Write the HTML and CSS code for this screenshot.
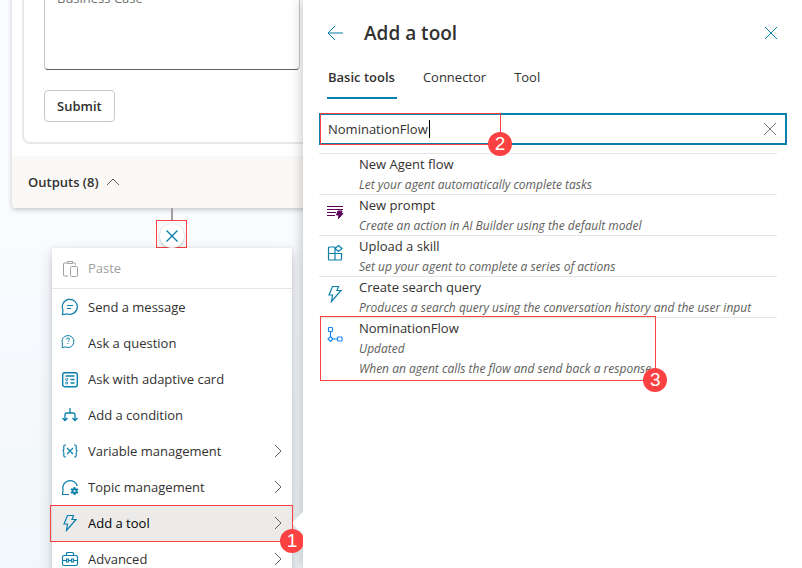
FILE: index.html
```html
<!DOCTYPE html>
<html lang="en">
<head>
<meta charset="utf-8">
<meta name="viewport" content="width=device-width, initial-scale=1">
<title>Add a tool</title>
<link rel="stylesheet" href="styles.css">
</head>
<body>
<div class="app">
  <main class="canvas">
    <section class="card">
      <form class="form">
        <textarea class="field" aria-label="Business Case" placeholder="Business Case"></textarea>
        <button class="submit" type="button">Submit</button>
      </form>
      <button class="outputs" type="button">Outputs (8)
        <svg width="14" height="14" viewBox="0 0 14 14"><path d="M1 10 7 4l6 6"/></svg>
      </button>
    </section>
    <div class="connector"></div>
    <div class="node-slot">
      <button class="node-close" type="button" aria-label="Close menu"><svg width="14" height="14" viewBox="0 0 14 14"><path d="m1.500 1.500 11 11m0-11-11 11"/></svg></button>
    </div>
    <nav class="menu" aria-label="Add node">
      <button class="item paste" type="button" disabled>
        <svg class="icon" viewBox="0 0 18 18"><path d="M6 4H3.500q-1 0-1 1v11q0 1 1 1H7M12 4h1.500q1 0 1 1v1M6.500 2.500h5v2h-5zM10.500 7.500h5q1 0 1 1v8q0 1-1 1h-5q-1 0-1-1v-8q0-1 1-1z"/></svg>
        <span>Paste</span>
      </button>
      <button class="item" type="button">
        <svg class="icon" viewBox="0 0 18 18"><path stroke-width="1.200" d="M1.500 16.500 2 12A7.500 7.500 0 1 1 6 15.800zM6 7.500h6M6 10.500h4"/></svg>
        <span>Send a message</span>
      </button>
      <button class="item" type="button">
        <svg class="icon" viewBox="0 0 18 18"><path d="M1 13.500 1.500 10A6 6 0 1 1 4.500 13zM5.500 5.500q0-1.500 1.500-1.500t1.500 1.500q0 1-1.500 2M7 9v1"/></svg>
        <span>Ask a question</span>
      </button>
      <button class="item" type="button">
        <svg class="icon" viewBox="0 0 18 18"><rect x="1.700" y="2.700" width="14.600" height="14" rx="2" stroke-width="1.400"/><path stroke-width="1.400" d="M4.500 6h9M9.500 9.500h4M9.500 13h4"/><rect x="4.700" y="8.500" width="2" height="2" rx=".8"/><rect x="4.700" y="12" width="2" height="2" rx=".8"/></svg>
        <span>Ask with adaptive card</span>
      </button>
      <button class="item" type="button">
        <svg class="icon" viewBox="0 0 18 18"><path stroke-width="1.300" d="M9 2v5M4 14.500V9q0-2 2-2h6q2 0 2 2v5.500M1.500 12 4 14.500 6.500 12M11.500 12l2.500 2.500 2.500-2.500"/></svg>
        <span>Add a condition</span>
      </button>
      <button class="item" type="button">
        <svg class="icon" viewBox="0 0 18 18"><path stroke-width="1.200" d="M5 3H4Q2.800 3 2.800 4.500v3Q2.800 9 1.300 9q1.500 0 1.500 1.500v3Q2.800 15 4 15h1M13 3h1q1.200 0 1.200 1.500v3q0 1.500 1.500 1.500-1.500 0-1.500 1.500v3q0 1.500-1.200 1.500h-1M6 6l6 6m0-6-6 6"/></svg>
        <span>Variable management</span>
        <svg class="chevron" viewBox="0 0 8 14"><path d="m1 1 6 6-6 6"/></svg>
      </button>
      <button class="item" type="button">
        <svg class="icon" viewBox="0 0 18 18"><path stroke-width="1.200" d="M8 16.500H1.500L2 12a7.300 7.300 0 1 1 14.300-4"/><path stroke-width="2" d="M13.500 9v8M10 11l7 4M17 11l-7 4"/><circle cx="13.500" cy="13" r="2" fill="#fff" stroke-width="1.800"/></svg>
        <span>Topic management</span>
        <svg class="chevron" viewBox="0 0 8 14"><path d="m1 1 6 6-6 6"/></svg>
      </button>
      <button class="item current" type="button">
        <svg class="icon" viewBox="0 0 18 18"><path stroke-width="1.200" d="M6.500 1.500h6l-1.500 4h4L5.500 16.500 6.500 10H3z"/></svg>
        <span>Add a tool</span>
        <svg class="chevron" viewBox="0 0 8 14"><path d="m1 1 6 6-6 6"/></svg>
        <span class="mark mark-item"><b class="badge">1</b></span>
      </button>
      <button class="item" type="button">
        <svg class="icon" viewBox="0 0 18 18"><path stroke-width="1.200" d="M3 5.500h12q1.500 0 1.500 1.500v7q0 1.500-1.500 1.500H3Q1.500 15.500 1.500 14V7Q1.500 5.500 3 5.500zM5.500 5.500V3.500q0-1 1-1h5q1 0 1 1v2M1.500 10.500h4m2 0h3m2 0h4M5.500 9v3h2V9zM10.500 9v3h2V9z"/></svg>
        <span>Advanced</span>
        <svg class="chevron" viewBox="0 0 8 14"><path d="m1 1 6 6-6 6"/></svg>
      </button>
    </nav>
  </main>

  <aside class="panel">
    <span class="beak"></span>
    <header class="head">
      <button class="plain" type="button" aria-label="Back"><svg width="16" height="16" viewBox="0 0 16 16"><path d="M8 1 1 8l7 7M1 8h15"/></svg></button>
      <h1>Add a tool</h1>
      <button class="plain" type="button" aria-label="Close"><svg width="14" height="14" viewBox="0 0 14 14"><path d="m1 1 12 12m0-12L1 13"/></svg></button>
    </header>
    <div class="tabs" role="tablist">
      <button class="tab selected" type="button" role="tab" aria-selected="true">Basic tools</button>
      <button class="tab" type="button" role="tab" aria-selected="false">Connector</button>
      <button class="tab" type="button" role="tab" aria-selected="false">Tool</button>
    </div>
    <div class="search">
      <input type="text" aria-label="Search tools" value="NominationFlow">
      <span class="caret"></span>
      <button class="plain clear" type="button" aria-label="Clear"><svg width="14" height="14" viewBox="0 0 14 14"><path d="m1 1 12 12m0-12L1 13"/></svg></button>
      <span class="mark mark-search"><b class="badge">2</b></span>
    </div>
    <ul class="tools">
      <li><button class="tool" type="button">
        <span class="tool-icon"></span>
        <span class="tool-text"><span class="name">New Agent flow</span><em>Let your agent automatically complete tasks</em></span>
      </button></li>
      <li><button class="tool" type="button">
        <span class="tool-icon"><svg class="purple" viewBox="0 0 18 18"><path d="M1 3.500h16M1 6.500h16M1 9.500h9M1 12.500h8"/><path class="solid" d="M12 8h4l-.8 2.500H17L12.500 15.500l.5-3.500h-2.500z"/></svg></span>
        <span class="tool-text"><span class="name">New prompt</span><em>Create an action in AI Builder using the default model</em></span>
      </button></li>
      <li><button class="tool" type="button">
        <span class="tool-icon"><svg viewBox="0 0 18 18"><path stroke-width="1.200" d="M9 3H3.500q-1 0-1 1v11q0 1 1 1h11q1 0 1-1V9.500H2.500M9 3v13M12.500 1.500 16 4.500l-3.500 3-3.500-3z"/></svg></span>
        <span class="tool-text"><span class="name">Upload a skill</span><em>Set up your agent to complete a series of actions</em></span>
      </button></li>
      <li><button class="tool" type="button">
        <span class="tool-icon"><svg viewBox="0 0 18 18"><path stroke-width="1.200" d="M6.500 1.500h6l-1.500 4h4L5.500 16.500 6.500 10H3z"/></svg></span>
        <span class="tool-text"><span class="name">Create search query</span><em>Produces a search query using the conversation history and the user input</em></span>
      </button></li>
      <li><button class="tool" type="button">
        <span class="tool-icon"><svg class="blue" viewBox="0 0 18 18"><rect x="2.500" y="1.500" width="4" height="4" rx=".8"/><path d="M4.500 5.500v5M7 13h4.500M4.500 10.500 7 13l-2.500 2.500L2 13z"/><rect x="11.500" y="11" width="4.500" height="4" rx=".8"/></svg></span>
        <span class="tool-text"><span class="name">NominationFlow</span><em>Updated</em><em>When an agent calls the flow and send back a response</em><span class="mark mark-tool"><b class="badge">3</b></span></span>
      </button></li>
    </ul>
  </aside>
</div>
</body>
</html>
```
FILE: styles.css
```css
* { box-sizing: border-box; }

:root {
  --teal: #0b7fab;
  --ink: #323130;
  --line: #e6e6e6;
  --red: #fb4141;
}

body {
  margin: 0;
  font: 13px/20px "Open Sans", "Noto Sans", sans-serif;
  color: var(--ink);
}

button, input, textarea {
  font: inherit;
  color: inherit;
}

button {
  border: 0;
  background: none;
  padding: 0;
  text-align: left;
}

svg {
  display: block;
  flex: none;
  fill: none;
  stroke: var(--teal);
}

.app {
  display: grid;
  grid-template-columns: minmax(0, 1fr) 499px;
  height: 100vh;
  overflow: hidden;
}

/* Authoring canvas */
.canvas {
  min-width: 0;
  overflow: hidden;
  background: linear-gradient(#f9fbff 0, #f9fbff 40%, #f1f7fa 100%);
}

.card {
  margin: -42px -40px 0 12px;
  background: #fff;
  border-radius: 4px;
  box-shadow: 0 2px 5px rgba(0, 0, 0, .2);
}

.form {
  margin-left: 10px;
  padding: 20px 41px 20px 20px;
  border: 2px solid #e8e8e8;
  border-radius: 8px;
}

.field {
  display: block;
  width: 100%;
  height: 90px;
  margin-bottom: 20px;
  padding: 7px 12px;
  border: 1px solid #c8c8c8;
  border-bottom-color: #616161;
  border-radius: 4px;
  resize: none;
  outline: 0;
}

.field::placeholder { color: #707070; }

.submit {
  height: 32px;
  padding: 0 12px;
  border: 1px solid #c8c8c8;
  border-radius: 4px;
  font-weight: 600;
}

.outputs {
  display: flex;
  align-items: center;
  gap: 7px;
  width: 100%;
  height: 52px;
  margin-top: 12px;
  padding-left: 16px;
  background: #faf9f7;
  border-radius: 0 0 4px 4px;
  font-weight: 600;
}

.outputs svg { stroke: #605e5c; }

.connector {
  width: 2px;
  height: 12px;
  margin-left: 171px;
  background: #a19f9d;
}

.node-slot {
  display: flex;
  align-items: center;
  justify-content: center;
  width: 31px;
  height: 28px;
  margin-left: 156px;
  padding-top: 4px;
  border: 1px solid var(--red);
}

.node-close {
  display: flex;
  align-items: center;
  justify-content: center;
  width: 24px;
  height: 24px;
  border-radius: 50%;
  background: #fff;
  box-shadow: 0 1px 3px rgba(0, 0, 0, .25);
}

.node-close svg { stroke-width: 1.4; }

.menu {
  position: relative;
  width: 240px;
  margin-left: 52px;
  background: #fff;
  box-shadow: 0 6px 14px rgba(0, 0, 0, .16), 0 1px 4px rgba(0, 0, 0, .12);
}

.item {
  position: relative;
  display: flex;
  align-items: center;
  gap: 9px;
  width: 100%;
  height: 36px;
  padding: 0 10px 0 9px;
}

.icon {
  width: 18px;
  height: 18px;
}

.chevron {
  width: 8px;
  height: 14px;
  margin-left: auto;
  stroke: #605e5c;
}

.paste {
  height: 41px;
  border-bottom: 1px solid var(--line);
  color: #a19f9d;
}

.paste .icon { stroke: #a19f9d; }

.current {
  background: #edebe9;
  color: #000;
}

/* Numbered callouts */
.mark {
  position: absolute;
  z-index: 3;
  border: 1px solid var(--red);
  pointer-events: none;
}

.mark-item { inset: 0 -1px -1px -2px; }

.badge {
  position: absolute;
  right: -12px;
  bottom: -12px;
  width: 24px;
  height: 24px;
  border-radius: 50%;
  background: var(--red);
  color: #fff;
  font: 19px/24px "Liberation Sans", sans-serif;
  text-align: center;
}

/* Tool picker */
.panel {
  position: relative;
  padding: 16px 15px 0 16px;
  background: #fff;
  box-shadow: 0 0 12px rgba(0, 0, 0, .28);
}

.beak {
  position: absolute;
  left: -8px;
  top: 515px;
  width: 16px;
  height: 16px;
  background: #fff;
  transform: rotate(45deg);
}

.head {
  display: flex;
  align-items: center;
  height: 33px;
  padding: 0 9px 0 8px;
}

h1 {
  flex: 1;
  margin: 0 0 0 21px;
  font-size: 19px;
  font-weight: 600;
  line-height: 28px;
}

.tabs {
  display: flex;
  gap: 24px;
  padding-left: 8px;
}

.tab {
  height: 50px;
  padding: 8px 2px 0 1px;
  border-bottom: 2px solid transparent;
}

.tab + .tab { padding: 8px 2px 0; }

.selected {
  border-color: var(--teal);
  font-weight: 600;
}

.search {
  position: relative;
  display: flex;
  align-items: center;
  height: 32px;
  margin-top: 14px;
  padding: 0 8px 0 7px;
  border: 2px solid var(--teal);
}

.search input {
  flex: 1;
  min-width: 0;
  padding: 0;
  border: 0;
  outline: 0;
}

.caret {
  position: absolute;
  left: 108px;
  top: 5px;
  width: 1px;
  height: 18px;
  background: #000;
}

.clear svg { stroke: #797775; }

.mark-search {
  left: -1px;
  top: -2px;
  bottom: -2px;
  width: 181px;
}

.tools {
  margin: 8px 10px 0 0;
  padding: 0;
  list-style: none;
}

.tools li { border-top: 1px solid var(--line); }

.tool {
  display: flex;
  gap: 15px;
  width: 100%;
  padding-left: 7px;
}

.tool-icon {
  width: 18px;
  padding-top: 8px;
}

.tool-icon svg {
  width: 18px;
  height: 18px;
}

.tool-icon .purple { stroke: #5c005c; }
.tool-icon .solid { fill: #5c005c; }
.tool-icon .blue { stroke: #1a86f0; stroke-width: 1.2; }

.tool-text {
  position: relative;
  display: flex;
  flex-direction: column;
  gap: 1px;
}

.tool em {
  font-size: 12px;
  line-height: 19px;
  color: #605e5c;
}

.mark-tool { inset: -2px -5px -3px -39px; }
```
